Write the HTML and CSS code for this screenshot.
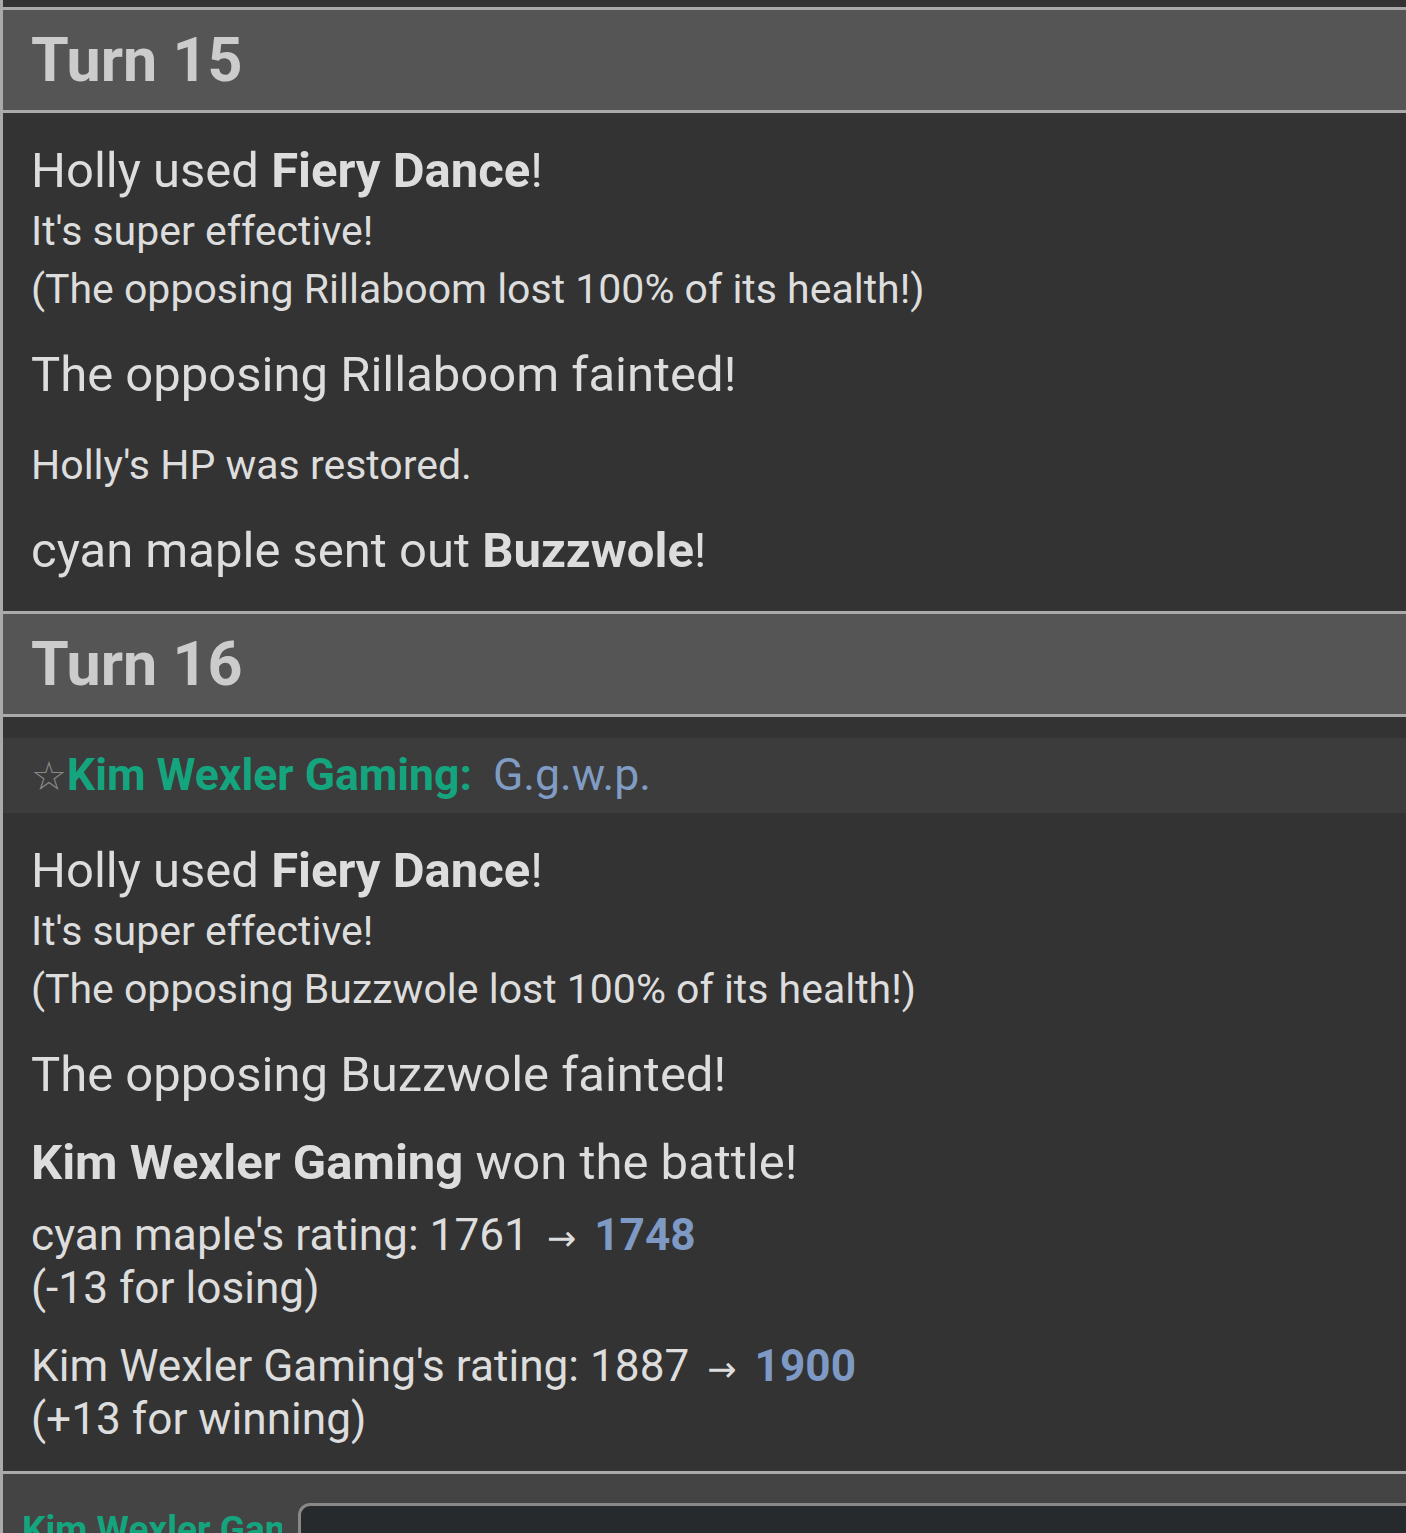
FILE: index.html
```html
<!DOCTYPE html>
<html lang="en">
<head>
<meta charset="utf-8">
<title>Battle log</title>
<link rel="stylesheet" href="styles.css">
</head>
<body>
<div class="battle-log">
  <h2 class="turn">Turn 15</h2>
  <div class="hist">Holly used <strong>Fiery Dance</strong>!<br><small>It's super effective!</small><br><small>(The opposing Rillaboom lost 100% of its health!)</small></div>
  <div class="hist">The opposing Rillaboom fainted!</div>
  <div class="hist"><small>Holly's HP was restored.</small></div>
  <div class="hist">cyan maple sent out <strong>Buzzwole</strong>!</div>
  <h2 class="turn">Turn 16</h2>
  <div class="chat-msg"><span class="group">☆</span><strong class="user">Kim Wexler Gaming:</strong> <span class="msg">G.g.w.p.</span></div>
  <div class="hist">Holly used <strong>Fiery Dance</strong>!<br><small>It's super effective!</small><br><small>(The opposing Buzzwole lost 100% of its health!)</small></div>
  <div class="hist">The opposing Buzzwole fainted!</div>
  <div class="hist"><strong>Kim Wexler Gaming</strong> won the battle!</div>
  <div class="ratings">
    <div class="rating">cyan maple's rating: 1761 <span class="arrow">→</span> <strong>1748</strong><br>(-13 for losing)</div>
    <div class="rating">Kim Wexler Gaming's rating: 1887 <span class="arrow">→</span> <strong>1900</strong><br>(+13 for winning)</div>
  </div>
</div>
<div class="controls">
  <div class="chat-name">Kim Wexler Gaming</div>
  <div class="chatbox"></div>
</div>
</body>
</html>
```

FILE: styles.css
```css
html, body {
  margin: 0;
  padding: 0;
}
body {
  width: 1406px;
  height: 1533px;
  overflow: hidden;
  background: #333;
  color: #ddd;
  font-family: Roboto, "Noto Sans", "DejaVu Sans", sans-serif;
  display: flex;
  flex-direction: column;
}
.battle-log {
  display: flex;
  flex-direction: column;
  border-left: 3px solid #aaa;
  padding: 7px 0 25px;
  background: #333;
}
.turn {
  margin: 16px 0 14px;
  padding: 0 0 0 28px;
  border-top: 3px solid #aaa;
  border-bottom: 3px solid #aaa;
  background: #555;
  color: #ccc;
  font-size: 61px;
  font-weight: 700;
  line-height: 100px;
}
.turn:first-child {
  margin-top: 0;
}
.hist {
  padding: 15px 28px;
  font-size: 49px;
  line-height: 58px;
}
.hist small {
  font-size: 41px;
  line-height: normal;
}
.chat-msg {
  margin: 7px 0 14px;
  padding: 11px 28px;
  background: #3c3c3c;
  font-size: 44.5px;
  line-height: 53px;
  white-space: nowrap;
}
.group {
  font-family: "DejaVu Sans", sans-serif;
  font-size: 40px;
  line-height: 1;
  color: #888;
}
.user {
  color: #14a57e;
  font-weight: 700;
}
.msg {
  padding-left: 10px;
  color: #809cc4;
}
.ratings {
  display: flex;
  flex-direction: column;
  gap: 25px;
  padding: 2px 28px 0;
  font-size: 44.2px;
  line-height: 53px;
}
.rating strong {
  color: #7d99c4;
}
.arrow {
  margin: 0 7px;
  font-size: 35px;
  line-height: 1;
}
.controls {
  flex: 1;
  display: flex;
  align-items: flex-start;
  gap: 16px;
  padding: 29px 0 0 19px;
  border-top: 3px solid #aaa;
  border-left: 3px solid #aaa;
  background: #444;
}
.chat-name {
  width: 260px;
  padding-top: 5px;
  overflow: hidden;
  white-space: nowrap;
  color: #14a57e;
  font-size: 37px;
  font-weight: 700;
  line-height: normal;
}
.chatbox {
  flex: 1;
  height: 100px;
  margin-right: -20px;
  border: 3px solid #888;
  border-radius: 12px;
  background: #272a2d;
}
```
